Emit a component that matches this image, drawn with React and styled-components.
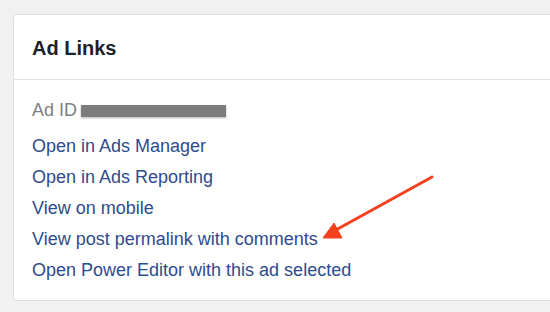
import React from "react";
import styled, { createGlobalStyle } from "styled-components";

const GlobalStyle = createGlobalStyle`
*{
    box-sizing: border-box;
    margin: 0;
    padding: 0;
}
body{
    background-color: #f1f1f1;
    font-family: "Liberation Sans", Arial, sans-serif;
    overflow: hidden;
}`

const Page = styled.div`
width: 550px;
height: 312px;
padding: 14px 0 0 13px;
position: relative;
overflow: hidden;
`
const Card = styled.section`
width: 560px;
background-color: #fff;
border: 1px solid #dddfe2;
border-radius: 3px;
`
const Header = styled.header`
height: 65px;
display: flex;
align-items: center;
padding: 3px 0 0 18px;
border-bottom: 1px solid #e1e2e5;
`
const Title = styled.h2`
font-size: 20px;
font-weight: bold;
color: #1d2129;
`
const Body = styled.div`
padding: 15px 18px 14px;
display: flex;
flex-direction: column;
`
const IdRow = styled.div`
height: 31px;
display: flex;
align-items: center;
gap: 4px;
margin-bottom: 5px;
font-size: 18px;
color: #7f7f7f;
`
const Redacted = styled.span`
width: 145px;
height: 12px;
background-color: #7c7c7c;
box-shadow: 0 1px 2px rgba(0,0,0,0.3);
`
const LinkItem = styled.a`
height: 31px;
display: flex;
align-items: center;
font-size: 18px;
color: #2d4b8e;
text-decoration: none;
`
const Arrow = styled.svg`
position: absolute;
left: 0;
top: 0;
pointer-events: none;
`

const links = [
    "Open in Ads Manager",
    "Open in Ads Reporting",
    "View on mobile",
    "View post permalink with comments",
    "Open Power Editor with this ad selected",
]

export default function App(){
    return(
        <>
        <GlobalStyle/>
        <Page>
            <Card>
                <Header>
                    <Title>Ad Links</Title>
                </Header>
                <Body>
                    <IdRow>Ad ID <Redacted/></IdRow>
                    {links.map(l => <LinkItem key={l} href="#">{l}</LinkItem>)}
                </Body>
            </Card>
            <Arrow width="550" height="312" viewBox="0 0 550 312">
                <line x1="432" y1="177" x2="334" y2="231" stroke="#f4401c" strokeWidth="3" strokeLinecap="round"/>
                <polygon points="323,238 334,223 342,238" fill="#f4401c" stroke="#f4401c" strokeWidth="1" strokeLinejoin="round"/>
            </Arrow>
        </Page>
        </>
    )
}
